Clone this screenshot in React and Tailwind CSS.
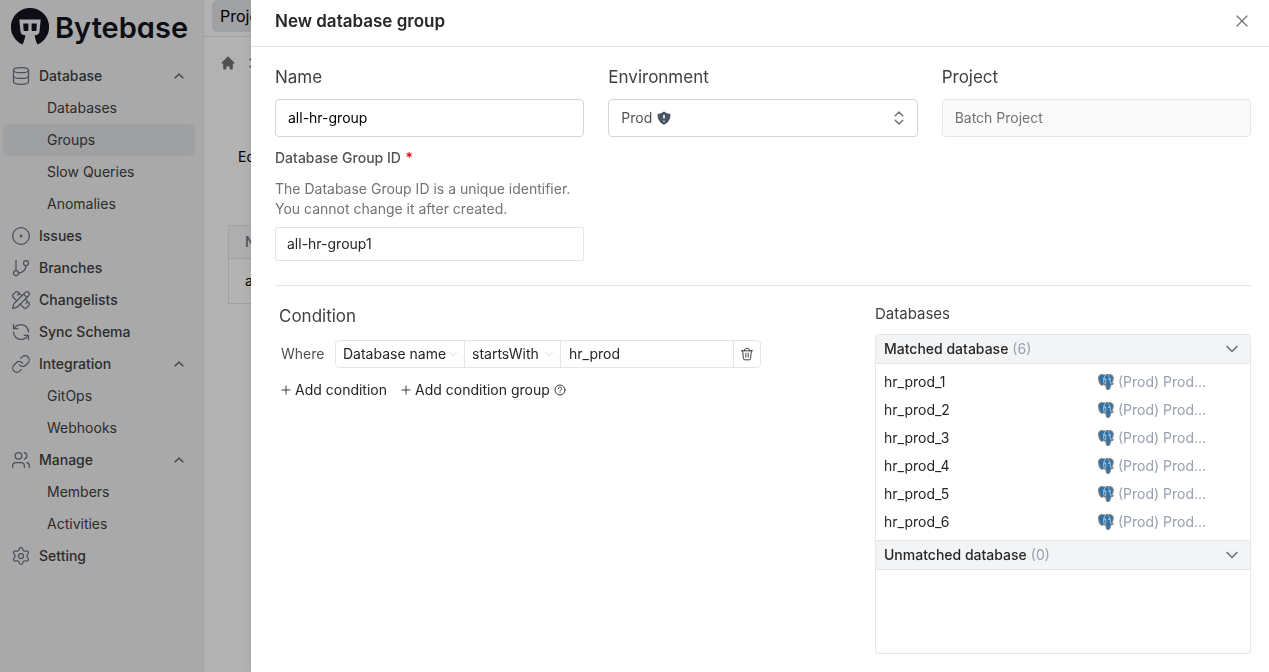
import React from "react";
import {
  Database,
  CircleDot,
  GitBranch,
  PencilRuler,
  RefreshCcw,
  Link,
  Users,
  Settings,
  ChevronUp,
  ChevronDown,
  ChevronRight,
  ChevronsUpDown,
  X,
  Plus,
} from "lucide-react";
import { HiHome, HiShieldExclamation } from "react-icons/hi";

const menu = [
  { label: "Database", icon: Database, children: ["Databases", "Groups", "Slow Queries", "Anomalies"] },
  { label: "Issues", icon: CircleDot },
  { label: "Branches", icon: GitBranch },
  { label: "Changelists", icon: PencilRuler },
  { label: "Sync Schema", icon: RefreshCcw },
  { label: "Integration", icon: Link, children: ["GitOps", "Webhooks"] },
  { label: "Manage", icon: Users, children: ["Members", "Activities"] },
  { label: "Setting", icon: Settings },
];

const matched = ["hr_prod_1", "hr_prod_2", "hr_prod_3", "hr_prod_4", "hr_prod_5", "hr_prod_6"];

function LogoMark() {
  return (
    <svg viewBox="0 0 38 38" className="size-[38px] shrink-0" aria-hidden="true">
      <path
        fill="#12141f"
        d="M19 0A19 19 0 0 0 11.500 36.500C13 33.500 14 30.500 14.300 27.300L12.500 27C10.500 26.500 9.700 25.500 9.500 23.500L8.300 11.500H29.700L28.500 23.500C28.300 25.500 27.500 26.500 25.500 27L23.700 27.300C24 30.500 25 33.500 26.500 36.500A19 19 0 0 0 19 0Z"
      />
      <path fill="#12141f" d="M12.200 15.500h5.200v6.200c0 .8-.5 1.300-1.300 1.300h-2.200c-.8 0-1.300-.5-1.400-1.300zM20.600 15.500h5.200l-.3 6.200c-.1.8-.6 1.300-1.400 1.300h-2.200c-.8 0-1.300-.5-1.300-1.300z" />
    </svg>
  );
}

function PostgresIcon() {
  return (
    <svg viewBox="0 0 32 32" className="size-4 shrink-0" aria-hidden="true">
      <path
        d="M10 1.500C4 1 .8 3.500 1.300 9.500c.4 4.500 2.700 10.500 5.200 12.500 1.300 1 2.800 0 4.500-1.700l1.500 1.200c1 .7 2.600.5 3.500.3.200 3-.2 9.200 3.800 9.200 4 0 4.800-3 5-8.500.2-.7 1-.8 2-1 1.600-.3 3.700-1.500 3.500-2.300-.3-1-2.300-.2-3.300-.7 2-3.500 4.200-9 3-12.500C28.500 2 24 .8 20.500 1.800c-1.500-.5-4-.4-5.300.6C13.800 1.800 12 1.500 10 1.500Z"
        fill="#2f72a8"
        stroke="#7d7f84"
        strokeWidth="2.400"
      />
      <g fill="none" stroke="#fff" strokeWidth="1.200" strokeLinecap="round">
        <path d="M14.500 3.500c-3.500 3-3.300 7.500-3 10.500.2 2.500-.5 3.500.5 5 .8 1 2.800.5 3.500-1 .8-2 .5-5-.2-7" />
        <path d="M20.500 3.500c3 2 4.500 5.500 4 9-.3 2.200-.4 4.500 1.200 6.500" />
        <path d="M21 10.500h1.700M12.500 10h2" strokeWidth="1.600" />
      </g>
    </svg>
  );
}

function TrashIcon() {
  return (
    <svg viewBox="0 0 24 24" className="size-[14px]" fill="none" stroke="currentColor" strokeWidth="1.500" strokeLinecap="round" strokeLinejoin="round" aria-hidden="true">
      <path d="M2.500 6.500h19M7.500 6.500C7.500 3.800 9.200 2 12 2s4.500 1.800 4.500 4.500M4.500 6.500l1.300 12.800A2.800 2.800 0 0 0 8.600 22h6.800a2.800 2.800 0 0 0 2.800-2.700l1.300-12.800M10 10.500v7M14 10.500v7" />
    </svg>
  );
}

function HelpIcon() {
  return (
    <svg viewBox="0 0 24 24" className="size-3" fill="none" stroke="currentColor" strokeWidth="1.800" strokeLinecap="round" aria-hidden="true">
      <circle cx="12" cy="12" r="10" />
      <path d="M8.800 9.600a3.200 3.200 0 1 1 4.700 2.700c-1 .6-1.500 1-1.500 2" />
      <path d="M12 17.400v.2" />
    </svg>
  );
}

function Sidebar() {
  return (
    <aside className="w-[204px] shrink-0 border-r border-gray-200 bg-[#f3f3f4]">
      <a href="#home" className="flex h-[60px] items-start gap-[6px] pt-2 pl-[11px] text-[#12141f]">
        <LogoMark />
        <span className="text-[29px] leading-10 font-semibold [font-feature-settings:'cv11']">Bytebase</span>
      </a>
      <nav className="pr-2 pl-[3px] text-sm text-neutral-700">
        {menu.map(({ label, icon: Icon, children }) => (
          <div key={label}>
            <a href={"#" + label} className="flex h-8 items-center gap-2 px-2 font-medium">
              <Icon className="size-5 text-gray-500" strokeWidth={1.5} />
              <span className="flex-1">{label}</span>
              {children && <ChevronUp className="size-4 text-neutral-600" strokeWidth={1.75} />}
            </a>
            {children &&
              children.map((child) => (
                <a
                  key={child}
                  href={"#" + child}
                  className={"flex h-8 items-center rounded-md pl-11 " + (child === "Groups" ? "bg-[#e4e5e7]" : "")}
                >
                  {child}
                </a>
              ))}
          </div>
        ))}
      </nav>
    </aside>
  );
}

function ProjectPage() {
  return (
    <main className="min-w-0 flex-1 bg-white">
      <div className="flex h-[37px] items-start border-b border-gray-200 pl-2">
        <button type="button" className="h-8 rounded-md bg-gray-200 px-2 text-base">
          Projects
        </button>
      </div>
      <div className="flex items-center gap-2 pt-[18px] pl-4 text-neutral-500">
        <HiHome className="size-4" />
        <ChevronRight className="size-4" />
      </div>
      <p className="pt-[76px] pl-[34px] text-sm">Edit</p>
      <div className="pt-[58px] pr-6 pl-6">
        <table className="w-full border border-gray-200 text-left text-sm">
          <thead>
            <tr className="h-[33px] border-b border-gray-200 bg-gray-50 text-neutral-500">
              <th className="pl-4 font-medium">Name</th>
            </tr>
          </thead>
          <tbody>
            <tr className="h-[45px]">
              <td className="pl-4">all-hr-group</td>
            </tr>
          </tbody>
        </table>
      </div>
    </main>
  );
}

function Field({ id, label, children }) {
  return (
    <div>
      <label htmlFor={id} className="mb-2 block text-[17px] leading-7 text-neutral-700">
        {label}
      </label>
      {children}
    </div>
  );
}

function InlineSelect({ label, value, className }) {
  return (
    <div className={"relative border-r border-neutral-200 " + className}>
      <select aria-label={label} defaultValue={value} className="h-full w-full appearance-none pl-[7px] outline-none">
        <option>{value}</option>
      </select>
      <ChevronDown className="pointer-events-none absolute top-[6px] right-1 size-[14px] text-neutral-300" strokeWidth={1.5} />
    </div>
  );
}

function ConditionEditor() {
  return (
    <section className="col-span-3 px-1 pt-1">
      <h2 className="text-[17px] leading-7 text-neutral-700">Condition</h2>
      <div className="mt-[10px] flex h-7 items-center pl-[2px] text-sm text-neutral-800">
        <span className="w-[54px] text-neutral-600">Where</span>
        <div className="flex h-7 w-[426px] rounded-sm border border-neutral-200">
          <InlineSelect label="Factor" value="Database name" className="w-[129px]" />
          <InlineSelect label="Operator" value="startsWith" className="w-24" />
          <input aria-label="Value" defaultValue="hr_prod" className="min-w-0 flex-1 px-2 outline-none" />
          <button type="button" aria-label="Remove condition" className="flex w-[27px] items-center justify-center border-l border-neutral-200">
            <TrashIcon />
          </button>
        </div>
      </div>
      <div className="mt-3 flex gap-3 text-sm text-neutral-800">
        <button type="button" className="flex items-center gap-[2px]">
          <Plus className="size-[14px]" strokeWidth={1.5} />
          Add condition
        </button>
        <button type="button" className="flex items-center gap-1">
          <span className="flex items-center gap-[2px]">
            <Plus className="size-[14px]" strokeWidth={1.5} />
            Add condition group
          </span>
          <HelpIcon />
        </button>
      </div>
    </section>
  );
}

function PanelHeader({ title, count, className }) {
  return (
    <button type="button" className={"flex w-full items-center gap-1 border-b border-gray-200 bg-gray-100 px-2 " + className}>
      <span className="font-medium">{title}</span>
      <span className="flex-1 text-left text-gray-400">({count})</span>
      <ChevronDown className="size-5 text-neutral-500" strokeWidth={2} />
    </button>
  );
}

function DatabasePanel() {
  return (
    <section className="col-span-2 pt-1">
      <h2 className="text-[15px] leading-6 text-neutral-700">Databases</h2>
      <div className="mt-2 overflow-hidden rounded-sm border border-gray-200 text-sm text-neutral-800">
        <PanelHeader title="Matched database" count={6} className="h-[29px]" />
        <ul className="py-1">
          {matched.map((name) => (
            <li key={name} className="flex h-7 items-center px-2">
              <span className="flex-1">{name}</span>
              <span className="flex w-36 items-center gap-1 text-gray-400">
                <PostgresIcon />
                (Prod) Prod...
              </span>
            </li>
          ))}
        </ul>
        <PanelHeader title="Unmatched database" count={0} className="h-[30px] border-t" />
        <div className="h-[83px]" />
      </div>
    </section>
  );
}

function Drawer() {
  return (
    <div role="dialog" aria-labelledby="drawer-title" className="fixed inset-y-0 right-0 left-[251px] overflow-hidden bg-white shadow-lg">
      <header className="flex h-[47px] items-center justify-between border-b border-neutral-200 pr-[17px] pb-1 pl-6">
        <h1 id="drawer-title" className="text-[17px] leading-7 font-semibold text-neutral-800">
          New database group
        </h1>
        <button type="button" aria-label="Close" className="text-neutral-500">
          <X className="size-5" strokeWidth={1.5} />
        </button>
      </header>
      <form className="pt-4 pr-[18px] pl-6">
        <div className="grid grid-cols-3 gap-x-6">
          <div>
            <Field id="name" label="Name">
              <input id="name" defaultValue="all-hr-group" className="h-[38px] w-full rounded-sm border border-neutral-300 px-3 pb-[2px] text-sm text-black outline-none" />
            </Field>
            <label htmlFor="group-id" className="mt-[11px] block text-sm font-medium text-neutral-600">
              Database Group ID <span className="pl-px text-red-600">*</span>
            </label>
            <p className="mt-[11px] text-sm text-neutral-500">The Database Group ID is a unique identifier. You cannot change it after created.</p>
            <input id="group-id" defaultValue="all-hr-group1" className="mt-2 h-[34px] w-full rounded-xs border border-neutral-200 px-[11px] pb-[2px] text-sm text-neutral-800 outline-none" />
          </div>
          <Field id="environment" label="Environment">
            <div className="relative">
              <select id="environment" defaultValue="Prod" className="h-[38px] w-full appearance-none rounded-sm border border-neutral-300 px-3 text-sm text-neutral-600 outline-none">
                <option>Prod</option>
                <option>Test</option>
              </select>
              <HiShieldExclamation className="pointer-events-none absolute top-[11px] left-12 size-4 text-gray-600" />
              <ChevronsUpDown className="pointer-events-none absolute top-[10px] right-[10px] size-[18px] text-neutral-500" strokeWidth={2} />
            </div>
          </Field>
          <Field id="project" label="Project">
            <input id="project" disabled defaultValue="Batch Project" className="h-[38px] w-full rounded-sm border border-neutral-200 bg-neutral-50 px-3 pb-[2px] text-sm text-neutral-500" />
          </Field>
        </div>
        <hr className="mt-6 mb-3 border-neutral-200" />
        <div className="grid grid-cols-5 gap-x-6">
          <ConditionEditor />
          <DatabasePanel />
        </div>
      </form>
    </div>
  );
}

export default function App() {
  return (
    <div className="flex min-h-screen overflow-hidden font-['Inter',sans-serif]">
      <Sidebar />
      <ProjectPage />
      <div className="fixed inset-0 bg-black/30" />
      <Drawer />
    </div>
  );
}
